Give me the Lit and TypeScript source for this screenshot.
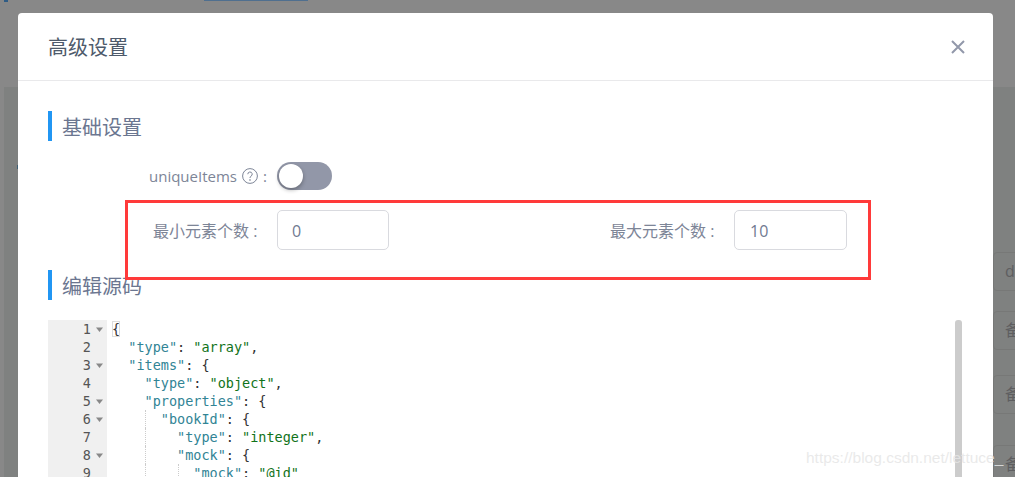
import { LitElement, html, css } from "lit";
import { customElement } from "lit/decorators.js";

type Tok = [string, string];
const LINES: { n: number; fold: boolean; indent: number; guides: number; toks: Tok[] }[] = [
  { n: 1, fold: true, indent: 0, guides: 0, toks: [["p", "{"]] },
  { n: 2, fold: false, indent: 2, guides: 0, toks: [["k", '"type"'], ["p", ": "], ["s", '"array"'], ["p", ","]] },
  { n: 3, fold: true, indent: 2, guides: 0, toks: [["k", '"items"'], ["p", ": {"]] },
  { n: 4, fold: false, indent: 4, guides: 0, toks: [["k", '"type"'], ["p", ": "], ["s", '"object"'], ["p", ","]] },
  { n: 5, fold: true, indent: 4, guides: 0, toks: [["k", '"properties"'], ["p", ": {"]] },
  { n: 6, fold: true, indent: 6, guides: 1, toks: [["k", '"bookId"'], ["p", ": {"]] },
  { n: 7, fold: false, indent: 8, guides: 1, toks: [["k", '"type"'], ["p", ": "], ["s", '"integer"'], ["p", ","]] },
  { n: 8, fold: true, indent: 8, guides: 1, toks: [["k", '"mock"'], ["p", ": {"]] },
  { n: 9, fold: false, indent: 10, guides: 2, toks: [["k", '"mock"'], ["p", ": "], ["s", '"@id"']] },
];

@customElement("app-root")
export class AppRoot extends LitElement {
  static styles = css`
    :host {
      display: block;
      width: 1015px;
      height: 477px;
      overflow: hidden;
      position: relative;
      font-family: "Open Sans", "Noto Sans CJK SC", sans-serif;
    }
    .page {
      position: absolute;
      inset: 0;
      background: #888888;
    }
    .panel { position: absolute; left: 4px; top: 87px; right: 0; bottom: 0; background: #7f8180; }
    .tab-mark { position: absolute; left: 4px; top: 0; width: 4px; height: 2px; background: #2f5c85; }
    .tab-line { position: absolute; left: 204px; top: 0; width: 104px; height: 1px; background: #4f6f8f; }
    .side-mark { position: absolute; left: 17px; top: 165px; width: 1px; height: 4px; background: #3f5f74; }
    .bg-cards {
      position: absolute;
      left: 993px;
      top: 252px;
      display: flex;
      flex-direction: column;
    }
    .bg-card {
      width: 60px;
      height: 37px;
      border: 1px solid #777877;
      border-radius: 4px;
      color: #5e5e60;
      font-size: 16px;
      line-height: 37px;
      padding-left: 11px;
    }
    .bg-card.a { margin-bottom: 20px; }
    .bg-card.b { margin-bottom: 25px; }
    .bg-card.c { margin-bottom: 31px; }

    .modal {
      position: absolute;
      left: 18px;
      top: 13px;
      width: 975px;
      height: 520px;
      background: #fff;
      border-radius: 4px;
      display: flex;
      flex-direction: column;
    }
    .head {
      height: 68px;
      flex: none;
      box-sizing: border-box;
      border-bottom: 1px solid #e9e9eb;
      display: flex;
      align-items: center;
      justify-content: space-between;
      padding: 0 27px 0 30px;
      font-size: 20px;
      line-height: 30px;
      color: #4e5a6b;
    }
    .title { padding-top: 2px; }
    .close { width: 16px; height: 16px; display: block; }
    .body { padding: 30px 30px 0; display: flex; flex-direction: column; }
    .sec {
      border-left: 4px solid #2196f3;
      padding-left: 10px;
      height: 30px;
      line-height: 33px;
      font-size: 20px;
      color: #6b7690;
    }
    .row1 {
      display: flex;
      align-items: center;
      margin: 21px 0 0 101px;
      height: 28px;
      color: #7d8597;
      font-size: 15px;
    }
    .q { width: 16px; height: 16px; margin: 0 5px 0 5px; display: block; }
    .switch {
      width: 55px;
      height: 28px;
      border-radius: 14px;
      background: #9297a8;
      margin-left: 10px;
      padding: 2px;
      box-sizing: border-box;
    }
    .knob {
      width: 24px;
      height: 24px;
      border-radius: 50%;
      background: #fff;
      box-shadow: 0 2px 4px rgba(0, 0, 0, 0.3);
    }
    .row2 {
      display: flex;
      height: 40px;
      margin: 20px 0 0 105px;
      align-items: center;
      color: #7d8597;
      font-size: 16px;
    }
    .lab { width: 124px; white-space: nowrap; }
    .inp {
      width: 112px;
      height: 40px;
      box-sizing: border-box;
      border: 1px solid #d9dadf;
      border-radius: 5px;
      padding: 0 14px;
      line-height: 40px;
      font-size: 16px;
      color: #707a91;
    }
    .gap { width: 221px; }
    .inp.last { width: 113px; padding-left: 15px; }
    .sec.two { margin-top: 20px; }
    .editor {
      margin-top: 20px;
      display: flex;
      width: 915px;
      height: 200px;
      position: relative;
      font-family: "DejaVu Sans Mono", monospace;
      font-size: 13.5px;
      line-height: 18px;
    }
    .gutter { width: 59px; flex: none; background: #f0f0f0; color: #555; }
    .gl {
      height: 18px;
      display: flex;
      justify-content: flex-end;
      align-items: center;
      padding-right: 4px;
      gap: 5px;
    }
    .tri { width: 7px; height: 7px; display: block; }
    .code { padding-left: 5px; color: #333; flex: 1; }
    .cl { height: 18px; position: relative; }
    .t { white-space: pre; }
    .k { color: #318495; }
    .s { color: #11731a; }
    .guide { position: absolute; top: 0; bottom: 0; width: 1px; border-left: 1px dotted #ccc; }
    .cursor { position: absolute; left: 0; top: 1px; width: 8px; height: 16px; border: 1px solid #ddd; box-sizing: border-box; }
    .scroll {
      position: absolute;
      left: 907px;
      top: 0;
      width: 7px;
      height: 200px;
      background: #cccccc;
      border-radius: 3px 3px 0 0;
    }
    .hl {
      position: absolute;
      left: 125px;
      top: 200px;
      width: 746px;
      height: 80px;
      box-sizing: border-box;
      border: 3px solid #ff3a3a;
      pointer-events: none;
    }
    .wm {
      position: absolute;
      left: 806px;
      top: 449px;
      font-family: "Liberation Sans", sans-serif;
      font-size: 15.5px;
      line-height: 18px;
      color: rgba(230, 230, 230, 0.85);
      white-space: nowrap;
    }
  `;

  render() {
    return html`
      <div class="page">
        <div class="panel"></div>
        <div class="tab-mark"></div>
        <div class="tab-line"></div>
        <div class="side-mark"></div>
        <div class="bg-cards">
          <div class="bg-card a">d</div>
          <div class="bg-card b">备</div>
          <div class="bg-card c">备</div>
          <div class="bg-card">备</div>
        </div>
      </div>
      <div class="modal">
        <div class="head">
          <span class="title">高级设置</span>
          <svg class="close" viewBox="0 0 16 16" fill="none" stroke="#9298aa" stroke-width="2">
            <path d="M2 2 L14 14 M14 2 L2 14" />
          </svg>
        </div>
        <div class="body">
          <div class="sec">基础设置</div>
          <div class="row1">
            <span>uniqueItems</span>
            <svg class="q" viewBox="0 0 16 16" fill="none" stroke="#7d8597" stroke-width="1">
              <circle cx="8" cy="8" r="7.4" />
              <path d="M5.8 6.2 A2.2 2.2 0 1 1 8.9 8.2 Q8 8.7 8 10" />
              <circle cx="8" cy="12" r="0.4" />
            </svg>
            <span>:</span>
            <div class="switch"><div class="knob"></div></div>
          </div>
          <div class="row2">
            <span class="lab">最小元素个数 :</span>
            <div class="inp">0</div>
            <div class="gap"></div>
            <span class="lab">最大元素个数 :</span>
            <div class="inp last">10</div>
          </div>
          <div class="sec two">编辑源码</div>
          <div class="editor">
            <div class="gutter">
              ${LINES.map(
                (l) => html`<div class="gl">
                  <span>${l.n}</span>
                  ${l.fold
                    ? html`<svg class="tri" viewBox="0 0 7 7"><path d="M0 1.5 H7 L3.5 6 Z" fill="#888" /></svg>`
                    : html`<span class="tri"></span>`}
                </div>`
              )}
            </div>
            <div class="code">
              ${LINES.map(
                (l) => html`<div class="cl">
                  ${l.n === 1 ? html`<span class="cursor"></span>` : ""}
                  ${Array.from({ length: l.guides }).map(
                    (_, i) => html`<span class="guide" style="left:${32.6 + i * 33}px"></span>`
                  )}
                  <span class="t">${" ".repeat(l.indent)}${l.toks.map((t) => html`<span class=${t[0]}>${t[1]}</span>`)}</span>
                </div>`
              )}
            </div>
            <div class="scroll"></div>
          </div>
        </div>
      </div>
      <div class="hl"></div>
      <div class="wm">https://blog.csdn.net/lettuce_</div>
    `;
  }
}
